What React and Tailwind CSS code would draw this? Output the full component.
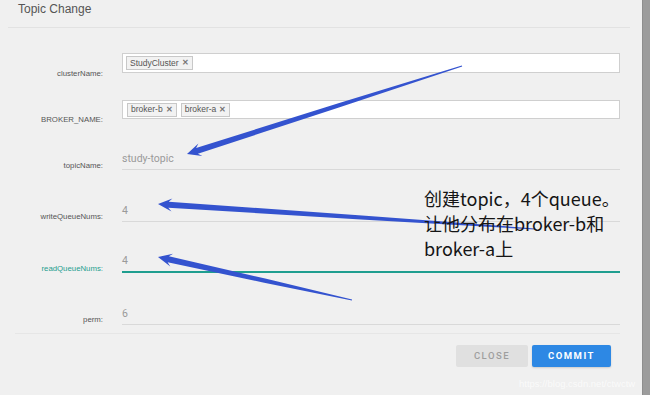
import React from "react";

const sans = { fontFamily: '"Liberation Sans", Arial, sans-serif' };

// tapered hand-drawn arrow, tail -> tip
function arrowPoints(t, p, headLen = 14, headW = 6.5, neck = 3, tail = 0.5) {
  const dx = p[0] - t[0];
  const dy = p[1] - t[1];
  const len = Math.hypot(dx, dy);
  const ux = dx / len;
  const uy = dy / len;
  const nx = -uy;
  const ny = ux;
  const wx = p[0] - ux * headLen;
  const wy = p[1] - uy * headLen;
  const kx = p[0] - ux * (headLen - 3.5);
  const ky = p[1] - uy * (headLen - 3.5);
  // mid point keeps the shaft fairly thick before it thins out
  const mx = t[0] + dx * 0.45;
  const my = t[1] + dy * 0.45;
  const mid = neck * 0.7;
  const pts = [
    [t[0] + nx * tail, t[1] + ny * tail],
    [mx + nx * mid, my + ny * mid],
    [kx + nx * neck, ky + ny * neck],
    [wx + nx * headW, wy + ny * headW],
    p,
    [wx - nx * headW, wy - ny * headW],
    [kx - nx * neck, ky - ny * neck],
    [mx - nx * mid, my - ny * mid],
    [t[0] - nx * tail, t[1] - ny * tail],
  ];
  return pts.map((q) => q[0].toFixed(1) + "," + q[1].toFixed(1)).join(" ");
}

const arrows = [
  { from: [462, 66], to: [187, 154] },
  { from: [535, 229], to: [158, 204] },
  { from: [352, 300], to: [158, 257] },
];

function Tag({ children }) {
  return (
    <span className="inline-flex items-center h-[14px] px-[3px] border border-[#c8c8c8] bg-[#f2f2f2] text-[8.5px] text-[#555] leading-none">
      {children}
      <span className="ml-[3px] text-[#777] text-[8px] font-bold">✕</span>
    </span>
  );
}

function Row({ label, labelTop, height, teal, children }) {
  return (
    <div className={`flex ${height}`}>
      <div
        className={`w-[103px] shrink-0 text-right text-[7.8px] leading-[10px] ${labelTop} ${
          teal ? "text-[#1f9e8f]" : "text-[#555]"
        }`}
        style={sans}
      >
        {label}
      </div>
      <div className="ml-[19px] flex-1">{children}</div>
    </div>
  );
}

function TextValue({ value, teal }) {
  return (
    <div
      className={`pt-[1px] text-[10.5px] leading-[18px] text-[#9a9a9a] ${
        teal ? "h-[22px] border-b-2 border-[#1f9e8f]" : "h-[21px] border-b border-[#d9d9d9]"
      }`}
      style={{ fontFamily: 'Roboto, "Noto Sans", sans-serif' }}
    >
      {value}
    </div>
  );
}

export default function App() {
  return (
    <div className="relative flex w-[650px] h-[395px] bg-[#f0f0f0] overflow-hidden">
      <div className="flex-1 flex flex-col">
        {/* header */}
        <div
          className="ml-[8px] mr-[12px] h-[28px] border-b border-[#e2e2e2] pl-[10px] text-[12px] leading-[19px] text-[#555]"
          style={sans}
        >
          Topic Change
        </div>

        {/* form */}
        <div className="pt-[25px] pr-[22px]">
          <Row label="clusterName:" labelTop="mt-[16px]" height="h-[47px]">
            <div className="h-[20px] flex items-center gap-[4px] pl-[3px] bg-white border border-[#cfcfcf]" style={sans}>
              <Tag>StudyCluster</Tag>
            </div>
          </Row>
          <Row label="BROKER_NAME:" labelTop="mt-[15px]" height="h-[49px]">
            <div className="h-[19px] flex items-center gap-[4px] pl-[4px] bg-white border border-[#cfcfcf]" style={sans}>
              <Tag>broker-b</Tag>
              <Tag>broker-a</Tag>
            </div>
          </Row>
          <Row label="topicName:" labelTop="mt-[12px]" height="h-[52px]">
            <TextValue value="study-topic" />
          </Row>
          <Row label="writeQueueNums:" labelTop="mt-[11px]" height="h-[50px]">
            <TextValue value="4" />
          </Row>
          <Row label="readQueueNums:" labelTop="mt-[13px]" height="h-[53px]" teal>
            <TextValue value="4" teal />
          </Row>
          <Row label="perm:" labelTop="mt-[11px]" height="h-[21px]">
            <TextValue value="6" />
          </Row>
        </div>

        <div className="mt-[8px] ml-[15px] mr-[22px] border-t border-[#e6e6e6]" />

        {/* footer buttons */}
        <div
          className="mt-[11px] pr-[31px] flex justify-end gap-[4px] text-[9.5px] font-bold tracking-[1.5px]"
          style={{ fontFamily: 'Roboto, "Noto Sans", sans-serif' }}
        >
          <button className="w-[72px] h-[22px] rounded-[2px] bg-[#e0e0e0] text-[#9e9e9e] font-medium">
            CLOSE
          </button>
          <button className="w-[79px] h-[22px] rounded-[2px] bg-[#2d88e4] text-white shadow-[0_1px_2px_rgba(0,0,0,0.15)]">
            COMMIT
          </button>
        </div>
      </div>

      {/* scrollbar strip at right */}
      <div className="w-[8px] shrink-0 bg-[#9c9c9c] border-l border-[#8e8e8e]" />

      {/* annotation overlay */}
      <svg className="absolute inset-0 pointer-events-none" width="650" height="395">
        {arrows.map((a, i) => (
          <polygon key={i} points={arrowPoints(a.from, a.to)} fill="#3453cf" />
        ))}
      </svg>
      <div
        className="absolute left-[424px] top-[186px] text-[18px] leading-[25px] text-[#151515] whitespace-nowrap"
        style={{ fontFamily: '"Noto Sans CJK SC", "Noto Sans", sans-serif' }}
      >
        <div>创建topic，4个queue。</div>
        <div>让他分布在broker-b和</div>
        <div>broker-a上</div>
      </div>

      {/* watermark */}
      <div
        className="absolute left-[519px] top-[377px] text-[9.5px] text-white/70 whitespace-nowrap"
        style={sans}
      >
        https://blog.csdn.net/ctwctw
      </div>
    </div>
  );
}
